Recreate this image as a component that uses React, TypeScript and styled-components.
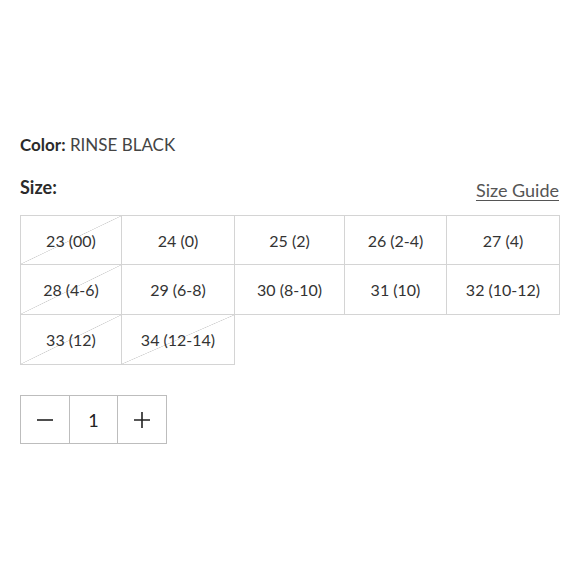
import { createGlobalStyle, styled } from 'styled-components'

const sizes = [
  { label: '23 (00)', soldOut: true },
  { label: '24 (0)', soldOut: false },
  { label: '25 (2)', soldOut: false },
  { label: '26 (2-4)', soldOut: false },
  { label: '27 (4)', soldOut: false },
  { label: '28 (4-6)', soldOut: true },
  { label: '29 (6-8)', soldOut: false },
  { label: '30 (8-10)', soldOut: false },
  { label: '31 (10)', soldOut: false },
  { label: '32 (10-12)', soldOut: false },
  { label: '33 (12)', soldOut: true },
  { label: '34 (12-14)', soldOut: true },
]

function App() {
  return (
    <>
      <GlobalStyle />
      <StPage>
        <StColorLine>
          <b>Color:</b> RINSE BLACK
        </StColorLine>
        <StSizeHeader>
          <b>Size:</b>
          <StGuideLink href="#">Size Guide</StGuideLink>
        </StSizeHeader>
        <StSizeGrid>
          {sizes.map((s) => (
            <StSizeCell key={s.label} $soldOut={s.soldOut}>
              {s.label}
            </StSizeCell>
          ))}
        </StSizeGrid>
        <StStepper>
          <StStepButton aria-label="decrease">
            <svg width="18" height="18" viewBox="0 0 18 18">
              <path d="M1 9h16" stroke="#222" strokeWidth="1.6" />
            </svg>
          </StStepButton>
          <StStepValue>1</StStepValue>
          <StStepButton aria-label="increase">
            <svg width="18" height="18" viewBox="0 0 18 18">
              <path d="M1 9h16M9 1v16" stroke="#222" strokeWidth="1.6" />
            </svg>
          </StStepButton>
        </StStepper>
      </StPage>
    </>
  )
}

export default App

// #region styles

const GlobalStyle = createGlobalStyle`
  html, body {
    margin: 0;
    padding: 0;
    background: #fff;
  }
  body {
    font-family: Lato, 'Noto Sans', sans-serif;
    color: #2b2b2b;
  }
`

const StPage = styled.div`
  width: 580px;
  height: 580px;
  box-sizing: border-box;
  padding: 134px 20px 0 20px;
  background: #fff;
`

const StColorLine = styled.div`
  font-size: 17px;
  line-height: 22px;
  color: #444;
  & > b {
    font-weight: 700;
    color: #2b2b2b;
  }
`

const StSizeHeader = styled.div`
  display: flex;
  justify-content: space-between;
  align-items: flex-end;
  margin-top: 20px;
  font-size: 18px;
  line-height: 22px;
  & > b {
    font-weight: 700;
  }
`

const StGuideLink = styled.a`
  color: #555;
  font-size: 18px;
  text-decoration: underline;
  text-underline-offset: 3px;
  margin-right: 1px;
  margin-bottom: -3px;
`

const StSizeGrid = styled.div`
  display: grid;
  grid-template-columns: 102px 113px 110px 102px 113px;
  grid-auto-rows: 50px;
  margin-top: 17px;
`

const StSizeCell = styled.div<{ $soldOut: boolean }>`
  display: flex;
  align-items: center;
  justify-content: center;
  box-sizing: border-box;
  border-right: 1px solid #d4d4d4;
  border-bottom: 1px solid #d4d4d4;
  font-size: 16px;
  color: #333;
  background: ${({ $soldOut }) =>
    $soldOut
      ? 'linear-gradient(to bottom right, transparent calc(50% - 0.6px), #d0d0d0 50%, transparent calc(50% + 0.6px))'
      : '#fff'};
  &:nth-child(5n + 1) {
    border-left: 1px solid #d4d4d4;
  }
  &:nth-child(-n + 5) {
    border-top: 1px solid #d4d4d4;
  }
`

const StStepper = styled.div`
  display: flex;
  margin-top: 30px;
  width: fit-content;
  border: 1px solid #bdbdbd;
`

const StStepButton = styled.button`
  width: 48px;
  height: 47px;
  display: flex;
  align-items: center;
  justify-content: center;
  padding: 0;
  border: none;
  background: #fff;
`

const StStepValue = styled.div`
  width: 47px;
  height: 47px;
  display: flex;
  align-items: center;
  justify-content: center;
  border-left: 1px solid #bdbdbd;
  border-right: 1px solid #bdbdbd;
  font-size: 18px;
  color: #222;
`

// #endregion styles
